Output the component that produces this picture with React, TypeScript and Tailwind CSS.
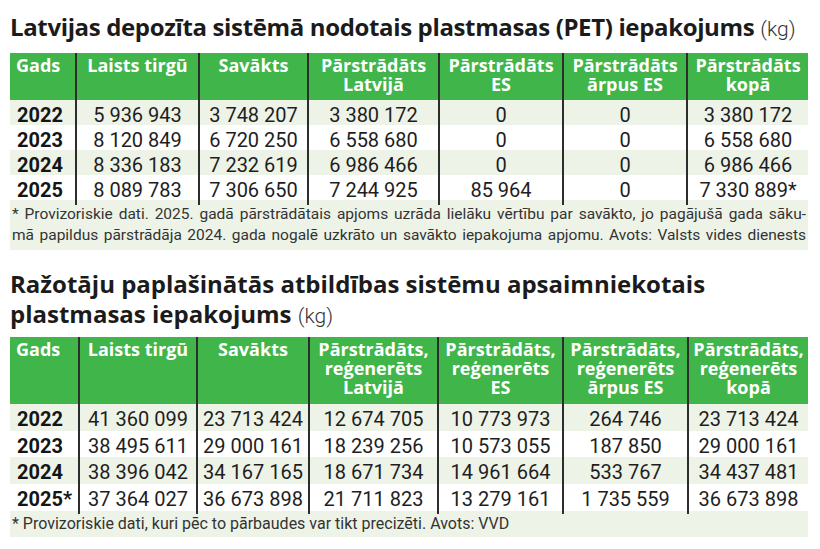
import React from 'react';

type Table = {
  cols: string;
  head: string[];
  headH: string;
  rowH: string;
  rows: string[][];
};

const PET: Table = {
  cols: 'grid-cols-[65px_123px_109px_131px_124px_124px_122px]',
  head: ['Gads', 'Laists tirgū', 'Savākts', 'Pārstrādāts\nLatvijā', 'Pārstrādāts\nES', 'Pārstrādāts\nārpus ES', 'Pārstrādāts\nkopā'],
  headH: 'h-[47px]',
  rowH: 'h-[25px]',
  rows: [
    ['2022', '5 936 943', '3 748 207', '3 380 172', '0', '0', '3 380 172'],
    ['2023', '8 120 849', '6 720 250', '6 558 680', '0', '0', '6 558 680'],
    ['2024', '8 336 183', '7 232 619', '6 986 466', '0', '0', '6 986 466'],
    ['2025', '8 089 783', '7 306 650', '7 244 925', '85 964', '0', '7 330 889*'],
  ],
};

const EPR: Table = {
  cols: 'grid-cols-[68px_118px_112px_129px_125px_125px_121px]',
  head: [
    'Gads',
    'Laists tirgū',
    'Savākts',
    'Pārstrādāts,\nreģenerēts\nLatvijā',
    'Pārstrādāts,\nreģenerēts\nES',
    'Pārstrādāts,\nreģenerēts\nārpus ES',
    'Pārstrādāts,\nreģenerēts\nkopā',
  ],
  headH: 'h-[67px]',
  rowH: 'h-[26.7px]',
  rows: [
    ['2022', '41 360 099', '23 713 424', '12 674 705', '10 773 973', '264 746', '23 713 424'],
    ['2023', '38 495 611', '29 000 161', '18 239 256', '10 573 055', '187 850', '29 000 161'],
    ['2024', '38 396 042', '34 167 165', '18 671 734', '14 961 664', '533 767', '34 437 481'],
    ['2025*', '37 364 027', '36 673 898', '21 711 823', '13 279 161', '1 735 559', '36 673 898'],
  ],
};

function DataTable({ table }: { table: Table }) {
  return (
    <div>
      <div className={`grid ${table.cols} ${table.headH} bg-[#3fb54a] text-white`}>
        {table.head.map((h, i) => (
          <div
            key={i}
            className={`whitespace-pre-line pt-[3px] font-['Open_Sans',sans-serif] text-[18px] font-bold leading-[19px] ${
              i === 0 ? 'pl-[6px] text-left' : 'border-l-2 border-[#2d2d2d] text-center'
            }`}
          >
            {h}
          </div>
        ))}
      </div>
      {table.rows.map((row, r) => (
        <div
          key={r}
          className={`grid ${table.cols} ${table.rowH} items-stretch text-[20px] text-[#1e1e1e] ${
            r % 2 === 0 ? 'bg-[#eef3e8]' : 'bg-white'
          }`}
        >
          {row.map((v, i) => (
            <div
              key={i}
              className={`flex items-center whitespace-nowrap ${
                i === 0
                  ? 'pl-[7px] font-bold text-[#151515]'
                  : 'justify-center border-l-2 border-[#2d2d2d]'
              }`}
            >
              {v}
            </div>
          ))}
        </div>
      ))}
    </div>
  );
}

export default function App() {
  return (
    <div className="h-[549px] w-[820px] overflow-hidden bg-white pl-[10px] pr-[12px] font-[Roboto,'Liberation_Sans',sans-serif]">
      <h1 className="whitespace-nowrap pt-[12px] font-['Open_Sans',sans-serif] text-[24px] font-bold leading-[30px] tracking-[-0.015em] text-[#1b1b1b]">
        Latvijas depozīta sistēmā nodotais plastmasas (PET) iepakojums{' '}
        <span className="font-[Roboto,sans-serif] text-[21px] font-light tracking-normal text-[#333]">(kg)</span>
      </h1>
      <div className="mt-[9px]">
        <DataTable table={PET} />
        <div className="bg-[#eef3e8] px-[2px] py-[4px] text-[15.5px] leading-[21px] text-[#333]">
          <div className="whitespace-nowrap [text-align-last:justify]">
            * Provizoriskie dati. 2025. gadā pārstrādātais apjoms uzrāda lielāku vērtību par savākto, jo pagājušā gada sāku-
          </div>
          <div className="whitespace-nowrap [text-align-last:justify]">
            mā papildus pārstrādāja 2024. gada nogalē uzkrāto un savākto iepakojuma apjomu. Avots: Valsts vides dienests
          </div>
        </div>
      </div>

      <h2 className="mt-[19px] whitespace-nowrap font-['Open_Sans',sans-serif] text-[24px] font-bold leading-[30px] tracking-normal text-[#1b1b1b]">
        Ražotāju paplašinātās atbildības sistēmu apsaimniekotais
        <br />
        plastmasas iepakojums{' '}
        <span className="font-[Roboto,sans-serif] text-[21px] font-light tracking-normal text-[#333]">(kg)</span>
      </h2>
      <div className="mt-[6px]">
        <DataTable table={EPR} />
        <div className="bg-[#eef3e8] px-[2px] py-[2px] text-[16px] leading-[22px] text-[#333]">
          * Provizoriskie dati, kuri pēc to pārbaudes var tikt precizēti. Avots: VVD
        </div>
      </div>
    </div>
  );
}
